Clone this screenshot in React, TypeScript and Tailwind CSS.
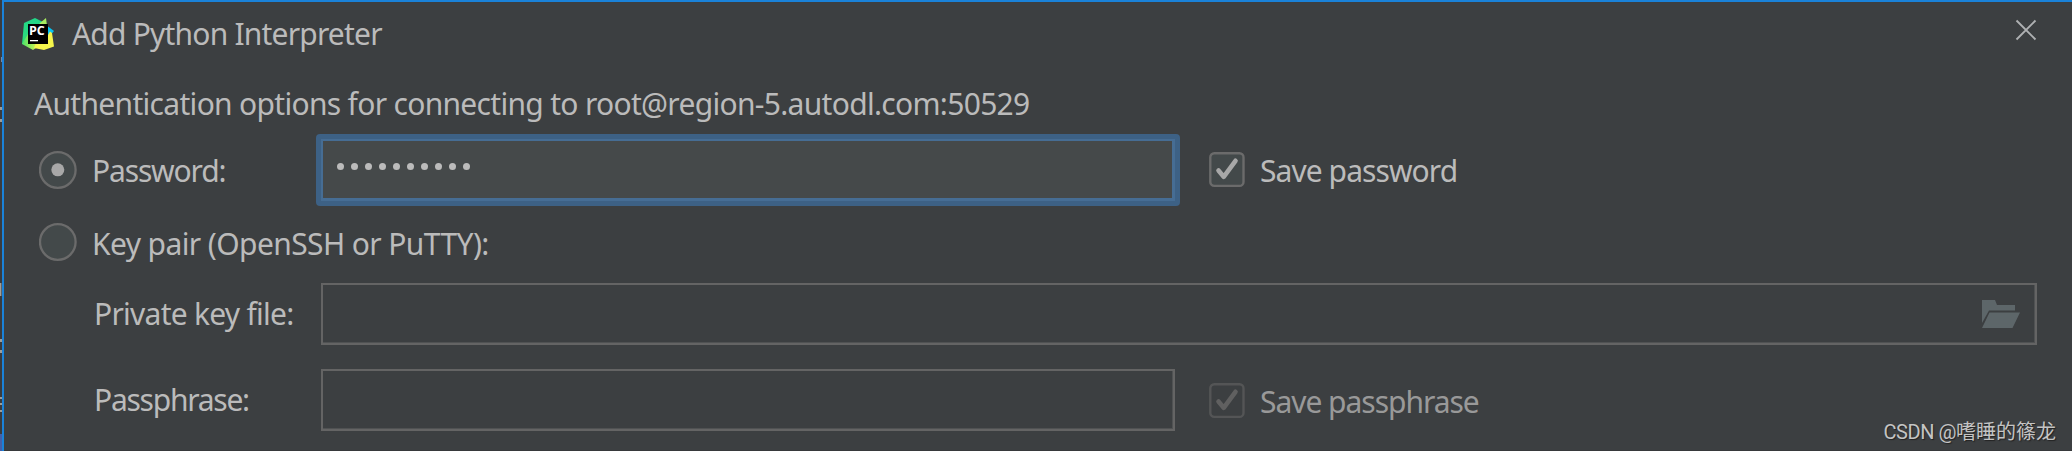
import type { ReactNode } from "react";

function Label({ children, className }: { children: ReactNode; className: string }) {
  return <span className={`block h-10 shrink-0 whitespace-nowrap leading-10 ${className}`}>{children}</span>;
}

function Radio({ checked = false }: { checked?: boolean }) {
  return (
    <svg className="h-[38px] w-[38px] shrink-0" viewBox="0 0 38 38">
      <circle cx="18.8" cy="19" r="17.8" fill="#43494a" stroke="#6b6b6b" strokeWidth="2.3" />
      {checked && <circle cx="18.8" cy="18.8" r="6.5" fill="#a8a8a8" />}
    </svg>
  );
}

function Checkbox({ disabled = false }: { disabled?: boolean }) {
  return (
    <svg className="h-9 w-9 shrink-0" viewBox="0 0 36 36">
      <rect x="1.3" y="1.3" width="33.2" height="32.6" rx="4" fill={disabled ? "#3c3f41" : "#43494a"} stroke={disabled ? "#545556" : "#6b6b6b"} strokeWidth="2.4" />
      <path d="M9.5 18.5 L14.7 24.8 L26.5 8.8" fill="none" stroke={disabled ? "#606060" : "#a8a8a8"} strokeWidth="4.6" strokeLinecap="round" strokeLinejoin="round" />
    </svg>
  );
}

function AppLogo() {
  return (
    <svg className="h-8 w-8 shrink-0" viewBox="0 0 32 32">
      <defs>
        <linearGradient id="green" x1="0" y1="0" x2="0" y2="1">
          <stop offset="0" stopColor="#21d789" />
          <stop offset="1" stopColor="#2fdf7c" />
        </linearGradient>
        <linearGradient id="lime" x1="0" y1="0" x2="1" y2="0">
          <stop offset="0" stopColor="#4be36a" />
          <stop offset="1" stopColor="#d8f250" />
        </linearGradient>
      </defs>
      <path d="M24 7 L32 13 L27 19 L24 17 Z" fill="#07c3f2" />
      <path d="M2 5 L13 0 L21 4 L20 15 L7 26 L0 26 Z" fill="url(#green)" />
      <path d="M24 0 L25 8 L16 8 L18 5 Z" fill="#a8ec60" />
      <path d="M0 26 L6 16 L16 20 L14 30 L11 32 Z" fill="url(#lime)" />
      <path d="M26 17 L28 13.5 L30 15 L32 28.5 L22 32 L12 30 L14 25 Z" fill="#f6f64c" />
      <rect x="6" y="6" width="20" height="20" fill="#000" />
      <rect x="8" y="22" width="8" height="1.3" fill="#fff" />
      <text x="7" y="16.6" fill="#fff" fontFamily="Open Sans, sans-serif" fontWeight="700" fontSize="12.5">PC</text>
    </svg>
  );
}

export default function App() {
  return (
    <div className="flex h-[451px] w-[2072px] overflow-hidden bg-[#3c3f41] font-['Noto_Sans',sans-serif] text-[30px] text-[#bbbbbb]">
      <svg className="h-[451px] w-[2px] shrink-0 bg-[#3a3b3d]" viewBox="0 0 2 451">
        <path d="M1 57h1v5h-1z" fill="#7689a8" />
        <path d="M0 107h2v3h-2zM0 119h2v3h-2zM0 283h1.4v13h-1.4zM0 339h2v3h-2zM0 350h2v3h-2zM0 397h2v2h-2zM0 403h2v2h-2zM0 410h2v2h-2z" fill="#a09d98" />
        <path d="M0 434h2v17h-2z" fill="#4460a8" />
      </svg>
      <main className="relative flex min-w-0 flex-1 flex-col border-l-2 border-t-2 border-[#1a82d9]">
        <header className="flex h-[68px] items-start pl-[18px] pt-4">
          <AppLogo />
          <Label className="-mt-[4px] ml-[18px] tracking-[-0.8px]">Add Python Interpreter</Label>
          <svg className="ml-auto mr-[35px] mt-[1px] h-[22px] w-[22px]" viewBox="0 0 22 22">
            <path d="M1.5 1.5 L20.5 20.5 M20.5 1.5 L1.5 20.5" stroke="#afb1b3" strokeWidth="1.9" />
          </svg>
        </header>
        <div className="flex h-[64px] pl-[30px] pt-[14px]">
          <Label className="tracking-[-0.69px]">Authentication options for connecting to root@region-5.autodl.com:50529</Label>
        </div>
        <div className="flex h-[72px] items-center pl-[35px]">
          <Radio checked />
          <Label className="ml-[15px] mt-[2px] w-[224px] tracking-[-1.15px]">Password:</Label>
          <div className="flex h-[72px] w-[864px] rounded-[4px] bg-[#3d6185] p-[5px]">
            <div className="flex w-full items-start gap-[7px] border-2 border-[#466d94] bg-[#45494a] pl-[14px] pt-[22px] shadow-[inset_-1px_-1px_0_#466d94]">
              {Array.from({ length: 10 }, (_, i) => (
                <i key={i} className="size-[7px] rounded-full bg-[#bbbbbb]" />
              ))}
            </div>
          </div>
          <div className="ml-[29px] flex items-center">
            <Checkbox />
            <Label className="ml-[15px] mt-[2px] tracking-[-0.93px]">Save password</Label>
          </div>
        </div>
        <div className="flex h-[72px] items-center pl-[35px]">
          <Radio />
          <Label className="ml-[15px] mt-[3px] tracking-[-0.6px]">Key pair (OpenSSH or PuTTY):</Label>
        </div>
        <div className="mt-[5px] flex h-[62px] items-center pl-[90px]">
          <Label className="w-[227px] tracking-[-0.74px]">Private key file:</Label>
          <div className="flex h-[62px] w-[1716px] items-center justify-end border-2 border-[#646464] pr-[15px] shadow-[inset_-1px_-1px_0_#505253]">
            <svg className="h-7 w-[38px]" viewBox="0 0 38 28">
              <path d="M0 0 H13 L15 5 H33 V10.5 H7 L0 23 Z M7.5 12.5 H38 L30.5 28 H0 Z" fill="#5d6669" />
            </svg>
          </div>
        </div>
        <div className="mt-6 flex h-[62px] items-center pl-[90px]">
          <Label className="w-[227px] tracking-[-1.25px]">Passphrase:</Label>
          <div className="h-[62px] w-[854px] border-2 border-[#646464] shadow-[inset_-1px_-1px_0_#505253]" />
          <div className="ml-[34px] mt-[1px] flex items-center text-[#999999]">
            <Checkbox disabled />
            <Label className="ml-[15px] mt-[2px] tracking-[-1.03px]">Save passphrase</Label>
          </div>
        </div>
        <div className="mt-auto h-px bg-[#37393b]" />
        <div className="absolute bottom-[5px] right-[16px] whitespace-nowrap font-['Roboto','Noto_Sans_CJK_SC',sans-serif] text-[20px] leading-7 text-[#c4c4c4] [text-shadow:1px_1px_1px_#222]">
          <span className="tracking-[-0.45px]">CSDN @</span>嗜睡的篠龙
        </div>
      </main>
    </div>
  );
}
